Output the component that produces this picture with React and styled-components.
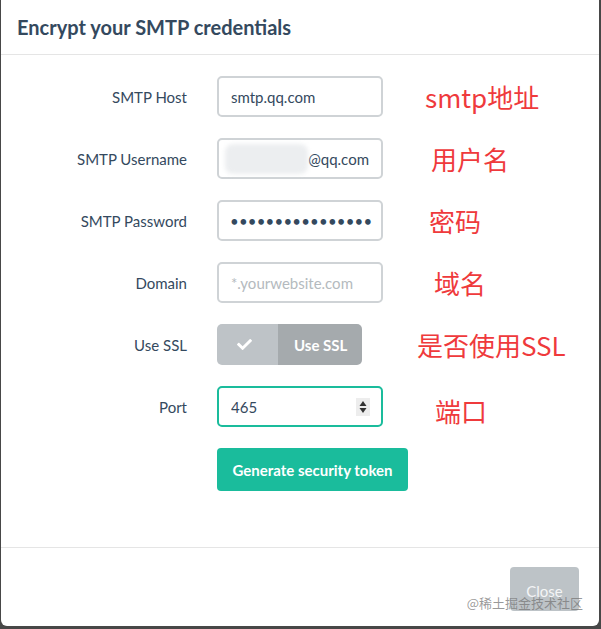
import styled, { createGlobalStyle } from "styled-components";
import { FaCheck } from "react-icons/fa";

const GlobalStyle = createGlobalStyle`
  html, body {
    margin: 0;
    padding: 0;
    background: #474747;
  }
  body {
    font-family: "Lato", "Noto Sans", sans-serif;
  }
`;

const Modal = styled.div`
  position: relative;
  height: 626px;
  margin: 0 2px 0 1px;
  background: #fff;
  border-radius: 0 0 6px 6px;
  display: flex;
  flex-direction: column;
  overflow: hidden;
`;

const Header = styled.div`
  height: 55px;
  padding: 0 16px;
  display: flex;
  align-items: center;
  border-bottom: 1px solid #e5e5e5;
  box-sizing: border-box;
`;

const Title = styled.h3`
  margin: 0;
  font-size: 20px;
  font-weight: 700;
  color: #34495e;
`;

const Body = styled.div`
  flex: 1;
  padding: 21px 0 0;
  border-bottom: 1px solid #e5e5e5;
  display: flex;
  flex-direction: column;
  gap: 21px;
`;

const Row = styled.div`
  display: grid;
  grid-template-columns: 186px 166px auto;
  column-gap: 30px;
  align-items: center;
  height: 41px;
`;

const Label = styled.label`
  text-align: right;
  font-size: 15px;
  color: #34495e;
`;

const Input = styled.input`
  box-sizing: border-box;
  width: 166px;
  height: 41px;
  padding: 0 12px;
  border: 2px solid #cfd3d6;
  border-radius: 5px;
  font-family: "Lato", sans-serif;
  font-size: 15px;
  color: #34495e;
  outline: none;
  background: #fff;

  &::placeholder {
    color: #b4babe;
  }

  &[type="password"] {
    letter-spacing: 0.2px;
    padding: 0 1px 0 11px;
  }
`;

const FakeInput = styled.div`
  box-sizing: border-box;
  width: 166px;
  height: 41px;
  padding: 0 12px 0 6px;
  border: 2px solid ${(p) => (p.$focused ? "#1abc9c" : "#cfd3d6")};
  border-radius: 5px;
  display: flex;
  align-items: center;
  font-size: 15px;
  color: #34495e;
`;

const Blur = styled.span`
  width: 86px;
  height: 30px;
  border-radius: 8px;
  background: #eceef0;
  filter: blur(2px);
`;

const BareInput = styled.input`
  flex: 1;
  min-width: 0;
  border: none;
  outline: none;
  padding: 0 0 0 6px;
  font-family: "Lato", sans-serif;
  font-size: 15px;
  color: #34495e;
  background: transparent;
`;

const Spinner = styled.span`
  width: 14px;
  height: 18px;
  background: #ededed;
  display: flex;
  align-items: center;
  justify-content: center;
  margin-right: -1px;
`;

const Toggle = styled.div`
  width: 145px;
  height: 41px;
  border-radius: 5px;
  overflow: hidden;
  display: flex;
`;

const ToggleOn = styled.span`
  width: 61px;
  background: #bec3c7;
  display: flex;
  align-items: center;
  justify-content: center;
  color: #fff;
  padding-right: 6px;
  box-sizing: border-box;
`;

const ToggleText = styled.span`
  flex: 1;
  background: #a5aaad;
  color: #fff;
  font-size: 15px;
  font-weight: 700;
  display: flex;
  align-items: center;
  padding-left: 16px;
`;

const Note = styled.span`
  margin-left: ${(p) => p.$offset}px;
  font-family: "Noto Sans CJK SC", "Noto Sans", sans-serif;
  font-size: 26px;
  line-height: 1;
  color: #ef3a3c;
  white-space: nowrap;
  position: relative;
  top: ${(p) => p.$shift || 0}px;
`;

const Actions = styled.div`
  padding-left: 216px;
`;

const PrimaryButton = styled.button`
  width: 191px;
  height: 43px;
  border: none;
  border-radius: 4px;
  background: #1abc9c;
  color: #fff;
  font-family: "Lato", sans-serif;
  font-size: 15px;
  font-weight: 700;
  cursor: pointer;
`;

const Footer = styled.div`
  height: 78px;
  display: flex;
  justify-content: flex-end;
  align-items: flex-start;
  padding: 19px 20px 0 0;
  box-sizing: border-box;
`;

const CloseButton = styled.button`
  width: 69px;
  height: 44px;
  border: none;
  border-radius: 4px;
  background: #bdc3c7;
  color: rgba(255, 255, 255, 0.85);
  font-family: "Lato", sans-serif;
  font-size: 15px;
  padding-top: 4px;
`;

const Watermark = styled.span`
  position: absolute;
  right: 16px;
  bottom: 14px;
  font-family: "Noto Sans CJK SC", sans-serif;
  font-size: 13px;
  color: rgba(120, 120, 120, 0.75);
`;

const fields = [
  { label: "SMTP Host", note: "smtp地址", offset: 12 },
  { label: "SMTP Username", note: "用户名", offset: 18 },
  { label: "SMTP Password", note: "密码", offset: 16 },
  { label: "Domain", note: "域名", offset: 21 },
  { label: "Use SSL", note: "是否使用SSL", offset: 4 },
  { label: "Port", note: "端口", offset: 22, shift: 4 },
];

const renderField = (label) => {
  switch (label) {
    case "SMTP Host":
      return <Input defaultValue="smtp.qq.com" />;
    case "SMTP Username":
      return (
        <FakeInput>
          <Blur />
          @qq.com
        </FakeInput>
      );
    case "SMTP Password":
      return <Input type="password" defaultValue="xxxxxxxxxxxxxxxx" />;
    case "Domain":
      return <Input placeholder="*.yourwebsite.com" />;
    case "Use SSL":
      return (
        <Toggle>
          <ToggleOn>
            <FaCheck size={15} />
          </ToggleOn>
          <ToggleText>Use SSL</ToggleText>
        </Toggle>
      );
    default:
      return (
        <FakeInput $focused>
          <BareInput defaultValue="465" />
          <Spinner>
            <svg width="8" height="14" viewBox="0 0 8 14">
              <path d="M4 1 L7.5 6 H0.5 Z" fill="#333" />
              <path d="M4 13 L7.5 8 H0.5 Z" fill="#333" />
            </svg>
          </Spinner>
        </FakeInput>
      );
  }
};

const App = () => {
  return (
    <>
      <GlobalStyle />
      <Modal>
        <Header>
          <Title>Encrypt your SMTP credentials</Title>
        </Header>
        <Body>
          {fields.map((f) => (
            <Row key={f.label}>
              <Label>{f.label}</Label>
              {renderField(f.label)}
              <Note $offset={f.offset} $shift={f.shift}>
                {f.note}
              </Note>
            </Row>
          ))}
          <Actions>
            <PrimaryButton>Generate security token</PrimaryButton>
          </Actions>
        </Body>
        <Footer>
          <CloseButton>Close</CloseButton>
        </Footer>
        <Watermark>@稀土掘金技术社区</Watermark>
      </Modal>
    </>
  );
};

export default App;
